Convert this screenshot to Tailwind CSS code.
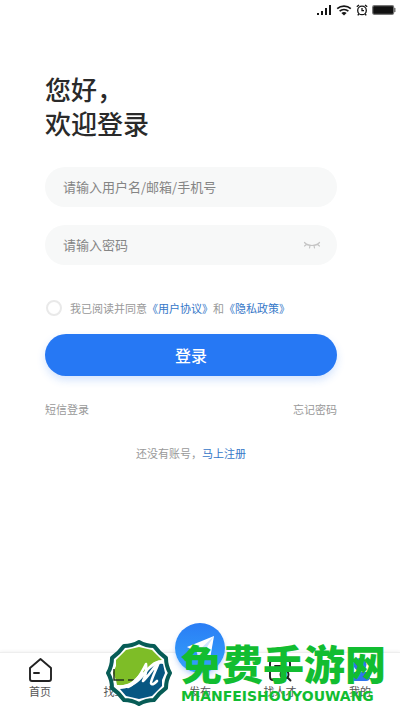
<!DOCTYPE html>
<html lang="zh-CN">
<head>
<meta charset="utf-8">
<meta name="viewport" content="width=device-width, initial-scale=1">
<title>登录</title>
<script src="https://cdn.jsdelivr.net/npm/@tailwindcss/browser@4"></script>
</head>
<body class="relative flex min-h-screen flex-col overflow-x-hidden bg-white font-['Noto_Sans_CJK_SC',sans-serif] text-[11px] leading-4 text-[#999]">
  <!-- Status bar -->
  <header class="flex h-5 items-center justify-end gap-1 pr-1 text-[#151515]">
    <svg class="h-3 w-4" viewBox="0 0 16 12" fill="currentColor" aria-hidden="true"><rect x="1" y="9" width="2" height="2"/><rect x="5" y="7" width="2" height="4"/><rect x="9" y="4" width="2" height="7"/><rect x="13" y="1" width="2" height="10"/></svg>
    <svg class="h-3 w-4" viewBox="0 0 16 12" fill="none" stroke="currentColor" stroke-width="1.6" aria-hidden="true"><path d="M1.2 4.7C5 1.2 11 1.2 14.8 4.7M3.6 7.2C6.1 4.9 9.9 4.9 12.4 7.2"/><path d="M5.4 8.9C6.9 7.8 9.1 7.8 10.6 8.9L8 11.5Z" fill="currentColor" stroke="none"/></svg>
    <svg class="h-3 w-3" viewBox="0 0 12 12" fill="none" stroke="currentColor" stroke-width="1.3" aria-hidden="true"><circle cx="6" cy="6.4" r="4.3"/><path d="M6 4v2.7h2M.8 2.8 3 .9M11.2 2.8 9 .9M2.800 10l-1 1.400M9.200 10l1 1.400"/></svg>
    <svg class="h-3 w-6" viewBox="0 0 24 12" aria-hidden="true"><rect x=".7" y="1.7" width="21" height="8.600" rx="1.500" fill="#111" stroke="#777" stroke-width="1.2"/><rect x="22" y="4" width="1.500" height="4" fill="#777"/></svg>
  </header>

  <main class="mr-[63px] ml-[45px] pt-[52px]">
    <h1 class="text-[26px] leading-[34px] font-medium text-[#2a2a2a]">您好，<br>欢迎登录</h1>
    <form class="mt-[27px]">
      <input type="text" aria-label="用户名" placeholder="请输入用户名/邮箱/手机号" class="block h-10 w-full rounded-full bg-[#f7f8f8] px-[18px] pb-[2px] text-[13px] placeholder:text-[#858585]">
      <div class="mt-[18px] flex h-10 items-center rounded-full bg-[#f7f8f8] pr-4 pl-[18px]">
        <input type="password" aria-label="密码" placeholder="请输入密码" class="h-full min-w-0 flex-1 bg-transparent pb-[2px] text-[13px] placeholder:text-[#858585]">
        <button type="button" aria-label="显示密码" class="text-[#c5c5c5]">
          <svg class="h-4 w-[18px]" viewBox="0 0 18 16" fill="none" stroke="currentColor" stroke-width="1.200" stroke-linecap="round"><path d="M1.500 5.500C5 9.500 13 9.500 16.500 5.500M3.600 7.500 1.500 9M7 8.500l-.5 2.500M11 8.500l.5 2.500M14.400 7.500l2.100 1.500"/></svg>
        </button>
      </div>
      <div class="mt-[35px] flex items-center">
        <input id="agree" type="checkbox" class="mr-2 ml-px h-4 w-4 appearance-none rounded-full border-2 border-[#e9e9e9] bg-white checked:bg-[#2878f5]">
        <p class="whitespace-nowrap"><label for="agree">我已阅读并同意</label><a href="#" class="text-[#3577c8]">《用户协议》</a>和<a href="#" class="text-[#3577c8]">《隐私政策》</a></p>
      </div>
      <button type="submit" class="mt-[18px] block h-[42px] w-full rounded-full bg-[#2678f4] text-base font-medium text-white shadow-[0_4px_8px] shadow-[#2678f4]/20">登录</button>
    </form>
    <div class="mt-[25px] flex justify-between"><a href="#">短信登录</a><a href="#">忘记密码</a></div>
    <p class="mt-7 pb-10 text-center">还没有账号，<a href="#" class="text-[#3577c8]">马上注册</a></p>
  </main>

  <!-- Tab bar -->
  <nav class="mt-auto border-t border-[#eee] shadow-[0_-1px_3px] shadow-black/5">
    <ul class="grid h-[58px] grid-cols-5 text-[#555]">
      <li><a href="#" class="flex flex-col items-center pt-1">
        <svg class="h-[26px] w-6" viewBox="0 0 24 26" fill="none" stroke="#222" stroke-width="1.900" stroke-linejoin="round" stroke-linecap="round" aria-hidden="true"><path d="M2 11 12.500 2 23 11V22q0 2-2 2H4q-2 0-2-2ZM6 16h5"/></svg>首页</a></li>
      <li><a href="#" class="flex flex-col items-center pt-1">
        <svg class="h-[26px] w-6" viewBox="0 0 24 26" fill="none" stroke="#222" stroke-width="1.700" stroke-linejoin="round" aria-hidden="true"><path d="M3 8h18v15H3ZM8 8V4h8v4"/></svg>找工作</a></li>
      <li><a href="#" class="flex flex-col items-center">
        <span class="-mt-[30px] grid h-[50px] w-[50px] place-items-center rounded-full bg-linear-to-b from-[#2a7df5] to-[#36a2fa] shadow-md shadow-[#2878f5]/25">
          <svg class="h-8 w-8" viewBox="0 0 32 32" aria-hidden="true"><path d="M3 15 30 4 26 27 16 22Z" fill="#fff"/><path d="m30 4-17 16 1 8 4-5Z" fill="#cfe4ff"/></svg>
        </span><span class="mt-[10px]">发布</span></a></li>
      <li><a href="#" class="flex flex-col items-center pt-1">
        <svg class="h-[26px] w-6" viewBox="0 0 24 26" fill="none" stroke="#222" stroke-width="1.900" stroke-linecap="round" aria-hidden="true"><path d="M11 23H5q-3 0-3-3V6q0-3 3-3h14q3 0 3 3v7M7 9h8M7 14h4"/><circle cx="16.500" cy="17.500" r="4"/><path d="m19.500 20.500 3 3"/></svg>找人才</a></li>
      <li><a href="#" class="flex flex-col items-center pt-1">
        <svg class="h-[26px] w-6" viewBox="0 0 24 26" fill="#2f74ee" aria-hidden="true"><circle cx="12" cy="7.500" r="6.500"/><rect x="3" y="15" width="19" height="9" rx="4"/></svg>我的</a></li>
    </ul>
  </nav>

  <!-- Site badge over the tab bar -->
  <div class="pointer-events-none absolute bottom-0 left-[105px] flex items-start gap-2">
    <svg class="h-[71px] w-[68px] shrink-0" viewBox="0 0 68 71" role="img" aria-label="M">
      <path d="M65 33Q61 40 61 48Q54 53 49 60Q41 60 34 64Q27 60 19 60Q14 53 7 48Q7 40 3 33Q7 26 7 18Q14 13 19 6Q27 6 34 2Q41 6 49 6Q54 13 61 18Q61 26 65 33Z" fill="#fff" stroke="#075c56" stroke-width="4" stroke-linejoin="round"/>
      <path d="M34 7 47 10 52 15 57 20C48 20 43 27 37 34C31 41 24 46 12 45L11 40 8 33 11 26 11 20 21 10Z" fill="#7ebd27"/>
      <path d="M58 24 60 33 57 40 57 46 47 56 34 59 21 56 15 49C28 48 34 42 40 35C46 27 51 23 58 24Z" fill="#075782"/>
      <path d="M9 29v11h10m4 0h6" fill="none" stroke="#22351b" stroke-width="1.500"/>
      <path d="M13 47C27 47 32 39 38 32" fill="none" stroke="#fff" stroke-width="3"/>
      <path d="M23 47C30 45 36 34 41 24C42 31 40 37 38 41C43 37 48 28 54 22C51 30 46 40 46 43C47 46 50 43 52 41" fill="none" stroke="#fff" stroke-width="2.600" stroke-linecap="round" stroke-linejoin="round"/>
    </svg>
    <div class="whitespace-nowrap text-[#12bd31]">
      <p class="text-[41px] leading-[44px] font-black">免费手游网</p>
      <p class="font-['DejaVu_Sans',sans-serif] text-sm leading-6 font-bold">MIANFEISHOUYOUWANG</p>
    </div>
  </div>
</body>
</html>
